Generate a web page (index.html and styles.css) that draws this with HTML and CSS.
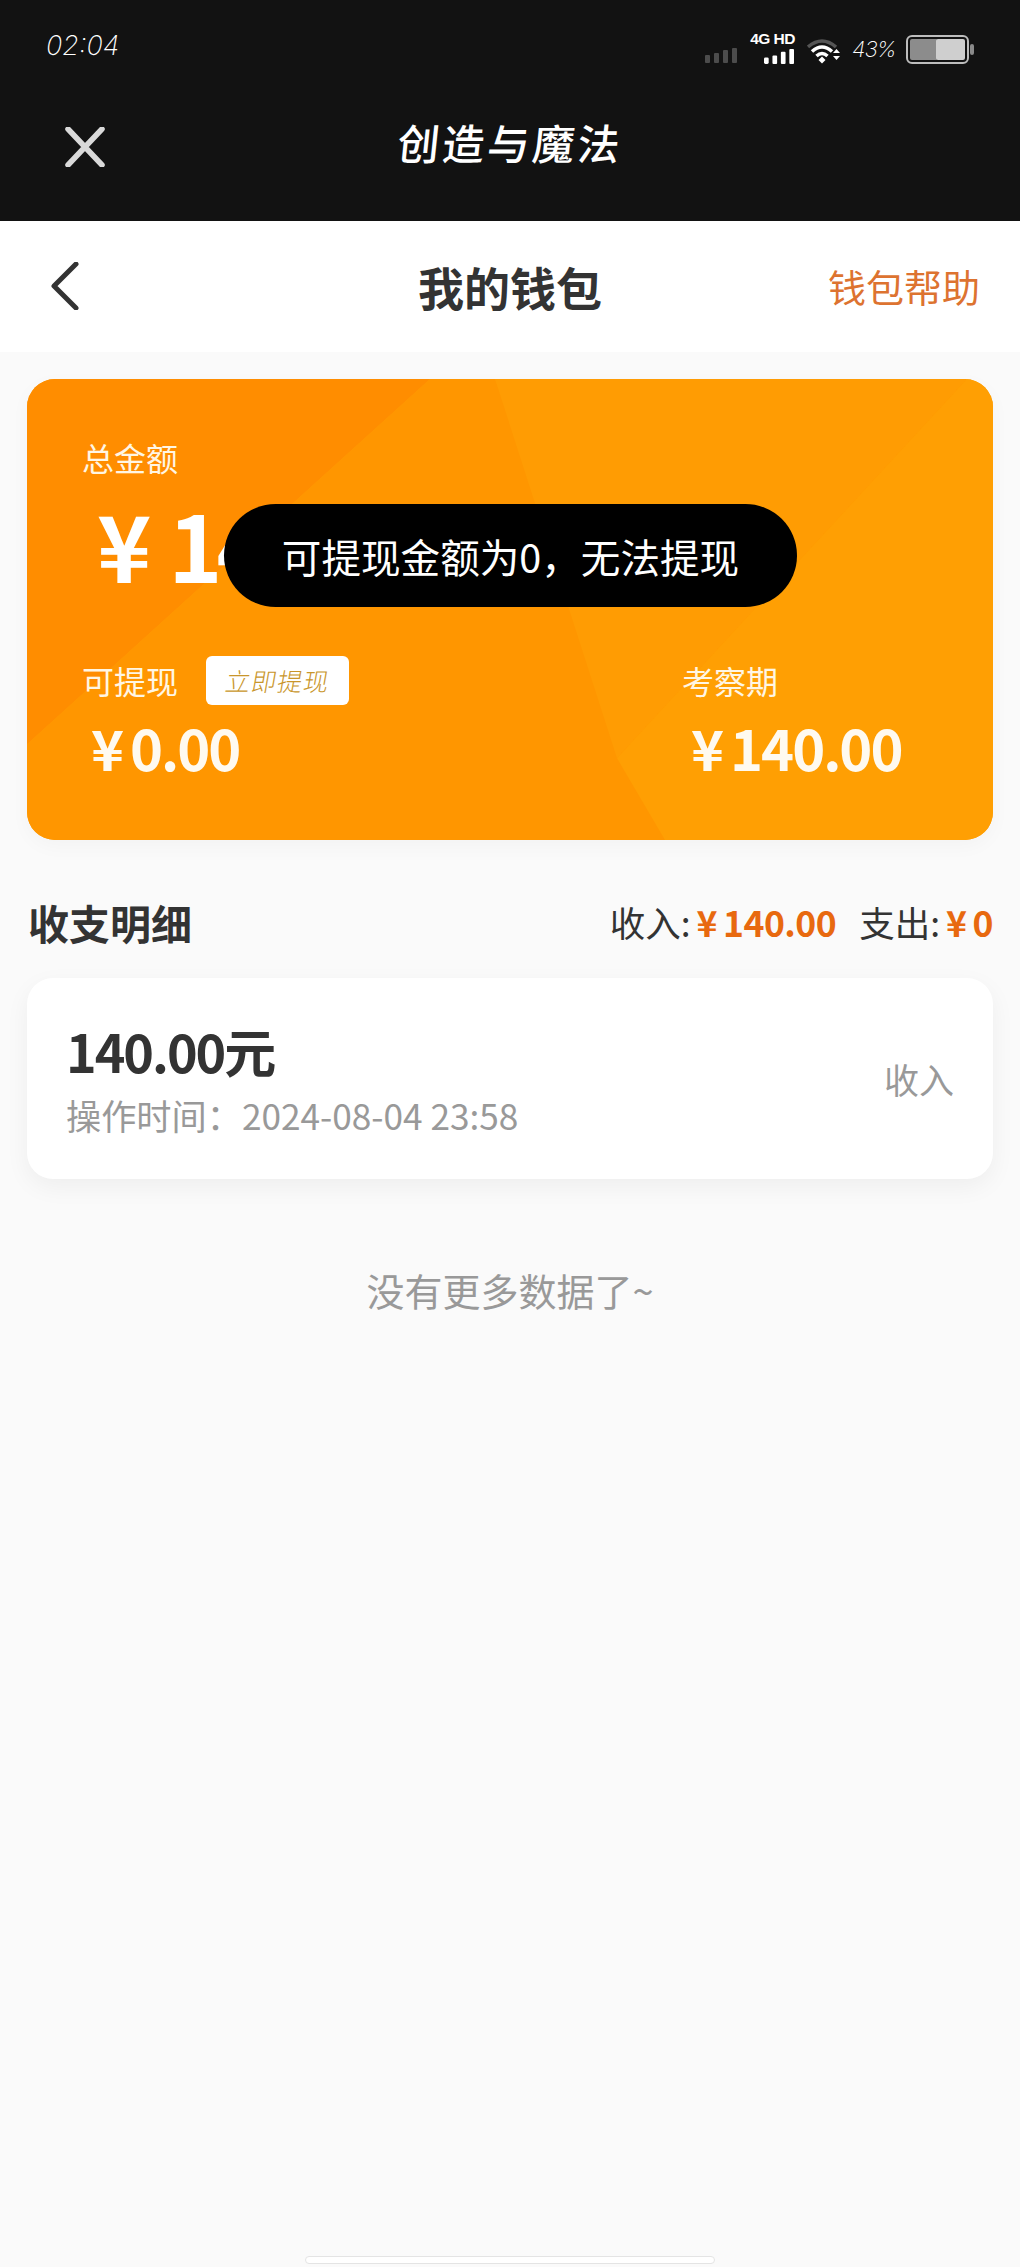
FILE: index.html
```html
<!DOCTYPE html>
<html lang="zh-CN">
<head>
<meta charset="utf-8">
<title>我的钱包</title>
<link rel="stylesheet" href="styles.css">
</head>
<body>
<div class="page">
  <div class="topbar">
    <div class="status">
      <span class="time">02:04</span>
      <div class="status-right">
        <svg class="sig-dim" viewBox="0 0 32 16" width="32" height="16"><g fill="#4c4c4c"><rect x="0" y="8" width="5" height="8" rx="1"/><rect x="9" y="6" width="5" height="10" rx="1"/><rect x="18" y="3" width="5" height="13" rx="1"/><rect x="27" y="1" width="5" height="15" rx="1"/></g></svg>
        <div class="net">
          <span class="net-label">4G HD</span>
          <svg viewBox="0 0 32 16" width="32" height="15"><g fill="#fff"><rect x="0" y="9" width="5" height="7" rx="1.5"/><rect x="9" y="7" width="5" height="9" rx="1"/><rect x="18" y="3" width="5" height="13" rx="1"/><rect x="27" y="0" width="5" height="16" rx="1"/></g></svg>
        </div>
        <svg class="wifi" viewBox="0 0 35 26" width="35" height="26">
          <path d="M1 9 Q15 -3 29 9" fill="none" stroke="#555" stroke-width="3.5"/>
          <path d="M5 13.5 Q15 4.5 25 13.5" fill="none" stroke="#fff" stroke-width="3.5"/>
          <path d="M9.5 18 Q15 13 20.5 18" fill="none" stroke="#fff" stroke-width="3.5"/>
          <path d="M11.5 22 L15 18.5 L18.5 22 L15 25.5Z" fill="#fff"/>
          <path d="M26 15 L29.5 11 L33 15Z M26 18 L33 18 L29.5 22Z" fill="#fff"/>
        </svg>
        <span class="pct">43%</span>
        <svg class="battery" viewBox="0 0 69 29" width="69" height="29">
          <rect x="1" y="1" width="61" height="27" rx="5" fill="none" stroke="#bdbdbd" stroke-width="2"/>
          <rect x="4" y="4" width="28" height="21" rx="2" fill="#8c8c8c"/>
          <rect x="30" y="4" width="29" height="21" rx="2" fill="#cfcfcf"/>
          <rect x="64" y="9" width="4" height="11" rx="2" fill="#8a8a8a"/>
        </svg>
      </div>
    </div>
    <div class="titlebar">
      <svg class="close" viewBox="0 0 40 40" width="40" height="40"><path d="M3 2 L37 38 M37 2 L3 38" stroke="#d9d9d9" stroke-width="5.5" stroke-linecap="round"/></svg>
      <span class="app-title">创造与魔法</span>
    </div>
  </div>

  <header class="header">
    <svg class="back" viewBox="0 0 28 48" width="28" height="48"><path d="M25 2 L3 24 L25 46" fill="none" stroke="#333" stroke-width="5" stroke-linecap="round" stroke-linejoin="round"/></svg>
    <h1 class="header-title">我的钱包</h1>
    <a class="help">钱包帮助</a>
  </header>

  <main class="main">
    <section class="wallet">
      <svg class="wallet-bg" viewBox="0 0 966 462" preserveAspectRatio="none" aria-hidden="true">
        <rect width="966" height="462" fill="#ff9c03"/>
        <polygon points="0,0 403,0 0,366" fill="#ff8d00"/>
        <polygon points="403,0 468,0 638,462 0,462 0,366" fill="#ff9600"/>
        <polygon points="468,0 940,0 590,380" fill="#ff9c03"/>
        <polygon points="590,380 940,0 966,0 966,462 638,462" fill="#ff9f03"/>
      </svg>
      <div class="total">
        <span class="label">总金额</span>
        <div class="total-amount"><span class="yen">¥</span>140.00</div>
      </div>
      <div class="split">
        <div class="col">
          <div class="label-row">
            <span class="label">可提现</span>
            <span class="withdraw"><span class="withdraw-text">立即提现</span></span>
          </div>
          <div class="amount"><span class="yen-sm">¥</span>0.00</div>
        </div>
        <div class="col col-right">
          <div class="label-row">
            <span class="label">考察期</span>
          </div>
          <div class="amount"><span class="yen-sm">¥</span>140.00</div>
        </div>
      </div>
      <div class="toast">可提现金额为0，无法提现</div>
    </section>

    <div class="detail-head">
      <h2 class="detail-title">收支明细</h2>
      <div class="detail-sum">
        <span>收入:</span><b class="money"><span class="yen-xs">¥</span>140.00</b>
        <span class="sum-gap">支出:</span><b class="money"><span class="yen-xs">¥</span>0</b>
      </div>
    </div>

    <article class="record">
      <div class="record-left">
        <div class="record-amount">140.00元</div>
        <div class="record-time">操作时间：2024-08-04 23:58</div>
      </div>
      <span class="record-type">收入</span>
    </article>

    <p class="nomore">没有更多数据了~</p>
  </main>

  <div class="home-bar"></div>
</div>
</body>
</html>
```
FILE: styles.css
```css
* { box-sizing: border-box; }
html, body { margin: 0; padding: 0; }
body {
  font-family: "Noto Sans CJK SC", "Noto Sans", sans-serif;
  background: #fafafa;
  color: #333;
}
.page {
  width: 1020px;
  height: 2267px;
  display: flex;
  flex-direction: column;
  overflow: hidden;
}

/* top black area */
.topbar { height: 221px; background: #121212; color: #fff; }
.status {
  height: 96px;
  padding: 30px 45px 0 46px;
  display: flex;
  justify-content: space-between;
  align-items: flex-start;
}
.time {
  font-family: "Inter", sans-serif;
  font-weight: 200;
  font-style: italic;
  font-size: 27px;
  line-height: 32px;
  letter-spacing: 0;
  color: #fff;
}
.status-right { display: flex; align-items: flex-end; height: 34px; }
.sig-dim { margin-bottom: 1px; }
.net {
  margin-left: 12px;
  width: 46px;
  display: flex;
  flex-direction: column;
  align-items: flex-end;
}
.net-label {
  font-family: "Liberation Sans", sans-serif;
  font-weight: 700;
  font-size: 15.5px;
  line-height: 14px;
  letter-spacing: -0.5px;
  white-space: nowrap;
  margin-bottom: 3px;
}
.wifi { margin-left: 12px; }
.pct {
  margin-left: 10px;
  width: 44px;
  font-family: "Inter", sans-serif;
  font-weight: 200;
  font-style: italic;
  font-size: 22px;
  line-height: 30px;
  letter-spacing: -1px;
}
.battery { margin-left: 10px; }

.titlebar {
  position: relative;
  height: 90px;
  display: flex;
  justify-content: center;
  padding-top: 21px;
}
.close { position: absolute; left: 65px; top: 31px; width: 40px; height: 40px; }
.app-title {
  font-size: 42px;
  line-height: 50px;
  font-weight: 500;
  letter-spacing: 3px;
  color: #fff;
  transform: skewX(-6deg);
}

/* header */
.header {
  height: 131px;
  background: #fff;
  display: grid;
  grid-template-columns: 1fr auto 1fr;
  align-items: center;
  padding: 0 40px 2px 40px;
}
.back { margin-left: 11px; }
.header-title {
  margin: 0;
  font-size: 46px;
  font-weight: 700;
  color: #333;
  line-height: 60px;
}
.help {
  justify-self: end;
  font-size: 38px;
  line-height: 50px;
  color: #dd7330;
}

/* main */
.main { padding: 27px 27px 0; flex: 1; }
.wallet {
  position: relative;
  height: 461px;
  border-radius: 28px;
  overflow: hidden;
  padding: 55px 55px 0;
  color: #fff;
  box-shadow: 0 6px 20px rgba(0, 0, 0, 0.03);
}
.wallet-bg { position: absolute; inset: 0; width: 100%; height: 100%; }
.total, .split { position: relative; }
.label { font-size: 32px; line-height: 46px; color: #fff6e4; }
.total .label { display: block; }
.total-amount {
  font-size: 92px;
  line-height: 100px;
  font-weight: 700;
  margin: 13px 0 0 15px;
  white-space: nowrap;
  letter-spacing: -6px;
}
.yen { margin-right: 23px; }
.split {
  display: flex;
  justify-content: space-between;
  margin-top: 62px;
}
.col { width: 600px; }
.col-right { width: 256px; }
.label-row { display: flex; align-items: center; height: 50px; }
.withdraw {
  margin-left: 28px;
  width: 143px;
  height: 49px;
  border-radius: 6px;
  background: #fff;
  display: flex;
  align-items: center;
  justify-content: center;
  overflow: hidden;
}
.withdraw-text {
  font-size: 25px;
  font-weight: 300;
  color: #c9962b;
  letter-spacing: 1px;
  transform: skewX(-10deg);
}
.amount {
  font-size: 56px;
  line-height: 68px;
  font-weight: 700;
  margin: 8px 0 0 9px;
  color: #fffaf0;
  white-space: nowrap;
  letter-spacing: -2px;
}
.yen-sm { margin-right: 8px; }
.toast {
  position: absolute;
  left: 197px;
  top: 125px;
  width: 573px;
  height: 103px;
  border-radius: 52px;
  background: #000;
  color: #fff;
  display: flex;
  align-items: center;
  justify-content: center;
  font-size: 39.6px;
  white-space: nowrap;
}

/* details */
.detail-head {
  display: flex;
  justify-content: space-between;
  align-items: center;
  margin: 52px 0 26px;
  height: 60px;
}
.detail-title {
  margin: 0 0 0 1px;
  font-size: 41px;
  line-height: 60px;
  font-weight: 700;
  color: #333;
}
.detail-sum { font-size: 35.5px; line-height: 60px; color: #333; font-weight: 400; }
.money { color: #e8690f; font-weight: 700; margin-left: 6px; letter-spacing: -0.5px; }
.yen-xs { margin-right: 6px; }
.sum-gap { margin-left: 15px; }

.record {
  height: 201px;
  background: #fff;
  border-radius: 26px;
  box-shadow: 0 8px 24px rgba(0, 0, 0, 0.05);
  display: flex;
  justify-content: space-between;
  align-items: center;
  padding: 0 39px;
}
.record-left { padding-top: 4px; }
.record-amount {
  font-size: 52px;
  line-height: 64px;
  font-weight: 700;
  color: #333;
  letter-spacing: -2px;
  margin-top: -4px;
}
.record-time { font-size: 35.2px; line-height: 46px; color: #999; margin-top: 9px; white-space: nowrap; }
.record-type { font-size: 35px; line-height: 46px; color: #999; }

.nomore {
  margin: 85px 0 0;
  text-align: center;
  font-size: 38px;
  line-height: 52px;
  color: #999;
}

.home-bar {
  flex: none;
  width: 410px;
  height: 8px;
  margin: 0 auto 3px;
  background: #fff;
  border: 1px solid #e4e4e4;
  border-radius: 4px;
}
```
